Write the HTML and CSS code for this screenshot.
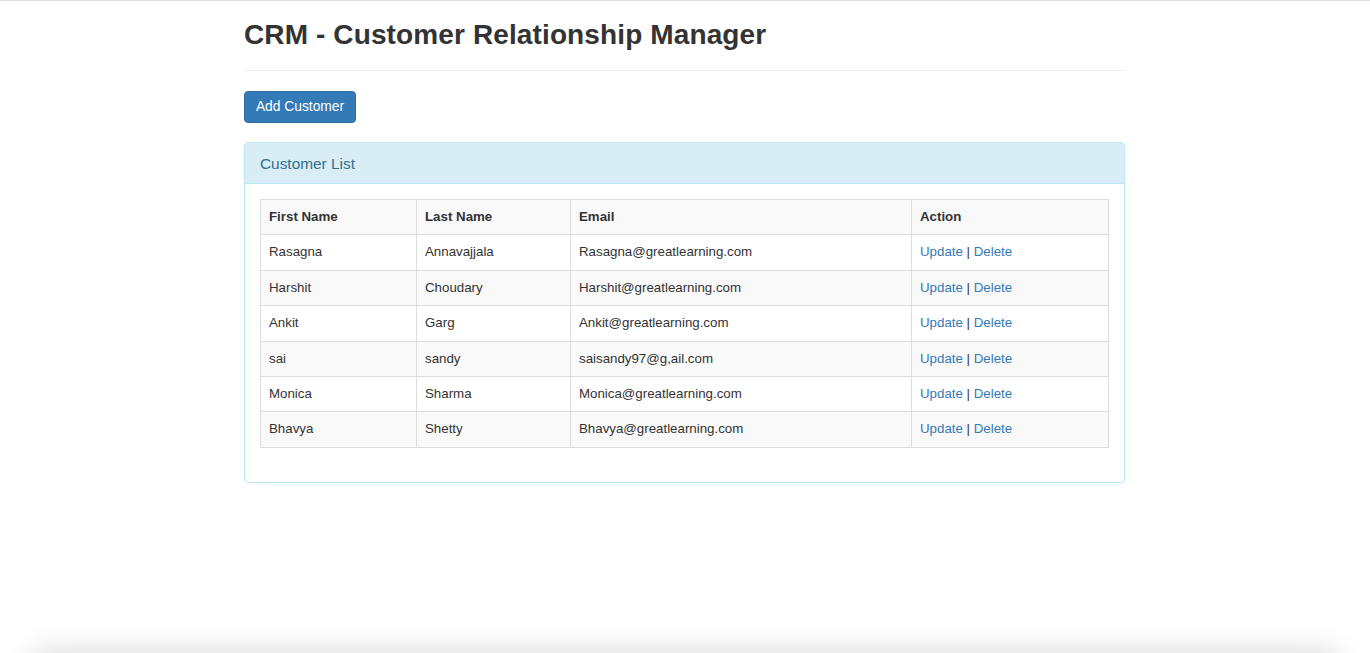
FILE: index.html
```html
<!DOCTYPE html>
<html lang="en">
<head>
<meta charset="utf-8">
<title>CRM - Customer Relationship Manager</title>
<link rel="stylesheet" href="styles.css">
</head>
<body>
<div class="container">
  <div class="page-header">
    <h1 class="title">CRM - Customer Relationship Manager</h1>
  </div>
  <button class="btn-primary" type="button">Add Customer</button>
  <div class="panel">
    <div class="panel-heading">
      <div class="panel-title">Customer List</div>
    </div>
    <div class="panel-body">
      <table class="table">
        <tbody>
          <tr>
            <th class="col-first">First Name</th>
            <th class="col-last">Last Name</th>
            <th class="col-email">Email</th>
            <th class="col-action">Action</th>
          </tr>
          <tr>
            <td>Rasagna</td><td>Annavajjala</td><td>Rasagna@greatlearning.com</td>
            <td><a href="#">Update</a> | <a href="#">Delete</a></td>
          </tr>
          <tr>
            <td>Harshit</td><td>Choudary</td><td>Harshit@greatlearning.com</td>
            <td><a href="#">Update</a> | <a href="#">Delete</a></td>
          </tr>
          <tr>
            <td>Ankit</td><td>Garg</td><td>Ankit@greatlearning.com</td>
            <td><a href="#">Update</a> | <a href="#">Delete</a></td>
          </tr>
          <tr>
            <td>sai</td><td>sandy</td><td>saisandy97@g,ail.com</td>
            <td><a href="#">Update</a> | <a href="#">Delete</a></td>
          </tr>
          <tr>
            <td>Monica</td><td>Sharma</td><td>Monica@greatlearning.com</td>
            <td><a href="#">Update</a> | <a href="#">Delete</a></td>
          </tr>
          <tr>
            <td>Bhavya</td><td>Shetty</td><td>Bhavya@greatlearning.com</td>
            <td><a href="#">Update</a> | <a href="#">Delete</a></td>
          </tr>
        </tbody>
      </table>
    </div>
  </div>
</div>
<div class="window-shadow"></div>
</body>
</html>
```

FILE: styles.css
```css
html, body {
  height: 100%;
}
body {
  margin: 0;
  padding: 0 245px 0 244px;
  border-top: 1px solid #e2e2e2;
  box-sizing: border-box;
  background: #fff;
  color: #333;
  font-family: "Liberation Sans", Arial, Helvetica, sans-serif;
  font-size: 13.3px;
  overflow: hidden;
}
.container {
  width: 100%;
}
.page-header {
  padding-top: 18px;
  padding-bottom: 20px;
  border-bottom: 1px solid #eee;
}
.title {
  margin: 0;
  font-size: 28px;
  line-height: 31px;
  font-weight: bold;
  letter-spacing: 0.12px;
  color: #333;
}
.btn-primary {
  display: block;
  box-sizing: border-box;
  margin-top: 20px;
  height: 32px;
  width: 112px;
  padding: 0;
  text-align: center;
  white-space: nowrap;
  background: #337ab7;
  border: 1px solid #2e6da4;
  border-radius: 4px;
  color: #fff;
  font-family: inherit;
  font-size: 13.8px;
  line-height: 30px;
  cursor: pointer;
}
.panel {
  margin-top: 19px;
  border: 1px solid #bce8f1;
  border-radius: 4px;
  background: #fff;
}
.panel-heading {
  background: #d9edf7;
  border-bottom: 1px solid #bce8f1;
  border-radius: 3px 3px 0 0;
  padding: 12px 15px 11px;
}
.panel-title {
  color: #31708f;
  font-size: 15.4px;
  line-height: 17px;
}
.panel-body {
  padding: 15px;
}
.table {
  width: 100%;
  border-collapse: collapse;
  border-spacing: 0;
  table-layout: fixed;
  margin-bottom: 19px;
  border: 1px solid #ddd;
}
.table th,
.table td {
  box-sizing: border-box;
  border: 1px solid #ddd;
  padding: 8px 8px;
  line-height: 18.4px;
  text-align: left;
  vertical-align: top;
}
.table th {
  font-weight: bold;
}
.table tr:nth-child(odd) {
  background: #f9f9f9;
}
.col-first { width: 156px; }
.col-last { width: 154px; }
.col-email { width: 341px; }
.col-action { width: auto; }
.table a {
  color: #337ab7;
  text-decoration: none;
}
.window-shadow {
  position: fixed;
  left: 30px;
  right: 30px;
  bottom: -40px;
  height: 40px;
  border-radius: 40px;
  box-shadow: 0 0 28px 4px rgba(0, 0, 0, 0.13);
  pointer-events: none;
}
```
